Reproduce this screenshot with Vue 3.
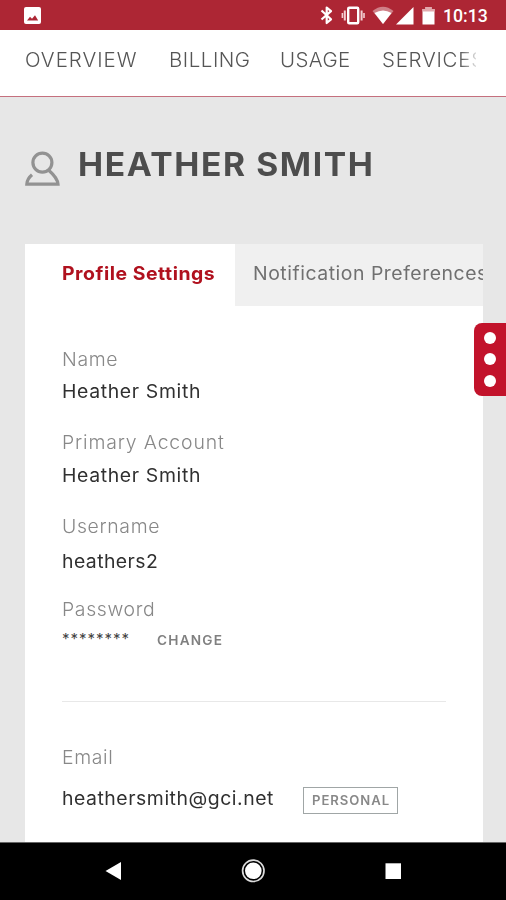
<script setup>
const nav = ['OVERVIEW', 'BILLING', 'USAGE', 'SERVICES']
const fields = [
  { key: 'name', label: 'Name', value: 'Heather Smith' },
  { key: 'account', label: 'Primary Account', value: 'Heather Smith' },
  { key: 'username', label: 'Username', value: 'heathers2' }
]
</script>

<template>
  <div class="screen">
    <header class="status">
      <svg class="photo" width="17" height="17" viewBox="0 0 17 17"><rect width="17" height="17" rx="2" fill="#fff" /><path d="M3 13.400l3-3.600 2 2 3-3.600 3.200 5.200z" fill="#ad2634" /></svg>
      <div class="status-right">
        <svg width="182" height="29" viewBox="0 0 182 29">
          <path d="M5.500 10.500l9.500 8.800-4.300 3.700V7.500l4.300 3.700-9.500 8.300" fill="none" stroke="#fff" stroke-width="2.200" stroke-linejoin="round" />
          <g fill="none" stroke="#f3cfd2"><rect x="32.200" y="7.700" width="10" height="15.500" rx="1" stroke-width="2.400" stroke="#fff" /><path d="M28.800 10.500v10M45.600 10.500v10" stroke-width="2" /><path d="M26.400 13v5M48 13v5" stroke-width="1.600" /></g>
          <path d="M56.500 11Q67 2.500 77.500 11L67 24z" fill="#cf7f87" /><path d="M58.500 13Q67 8 75.500 13L67 24z" fill="#fff" />
          <path d="M80 24.500L97.500 7v17.500z" fill="#fff" />
          <path d="M106.500 9h3V7h6v2h3v15.500h-12z" fill="#fff" /><path d="M106.500 9h3V7h6v2h3v2.500h-12z" fill="#e2a9ad" />
        </svg>
        <span class="clock">10:13</span>
      </div>
    </header>
    <nav class="nav">
      <a v-for="item in nav" :key="item" :class="['nav-item', item.toLowerCase()]"><span class="wide">{{ item }}</span></a>
    </nav>
    <main class="main">
      <div class="title">
        <svg width="36" height="36" viewBox="0 0 36 36" fill="none" stroke="#929292" stroke-width="3.200"><circle cx="17.400" cy="11.600" r="9.500" /><path d="M7 23.800Q2 28 1.800 33.200H33Q32.500 27 24 19.500" /></svg>
        <h1 class="wide">HEATHER SMITH</h1>
      </div>
      <section class="card">
        <div class="tabs">
          <div class="tab active"><span class="wide">Profile Settings</span></div>
          <div class="tab"><span class="wide">Notification Preferences</span></div>
        </div>
        <div class="body">
          <div v-for="f in fields" :key="f.key" :class="['field', f.key]">
            <div class="label"><span class="wide">{{ f.label }}</span></div>
            <div class="value"><span class="wide">{{ f.value }}</span></div>
          </div>
          <div class="field password">
            <div class="label"><span class="wide">Password</span></div>
            <div class="secret"><span class="stars">********</span><a class="change wide">CHANGE</a></div>
          </div>
          <div class="field email">
            <div class="label"><span class="wide">Email</span></div>
            <div class="value"><span class="wide">heathersmith@gci.net</span><div class="badge"><b class="wide">PERSONAL</b></div></div>
          </div>
        </div>
      </section>
      <button class="more" aria-label="More"><i></i><i></i><i></i></button>
    </main>
    <footer class="android">
      <svg width="506" height="58" viewBox="0 0 506 58" fill="#fff"><path d="M105.500 28L121 19v18z" /><circle cx="253.300" cy="27.800" r="8.300" /><circle cx="253.300" cy="27.800" r="10.700" fill="none" stroke="#ddd" stroke-width="1.700" /><rect x="385.500" y="20.300" width="15.500" height="15.700" /></svg>
    </footer>
  </div>
</template>

<style>
body { margin: 0; }
</style>

<style scoped>
* { box-sizing: border-box; }
.screen { width: 506px; height: 900px; display: flex; flex-direction: column; overflow: hidden; background: #e7e7e7; font-family: Inter, "Liberation Sans", sans-serif; }
.wide { display: inline-block; transform: scaleX(1.05); transform-origin: left; }
.status { height: 29.500px; flex: none; display: flex; justify-content: space-between; background: #ad2634; padding-left: 24px; }
.photo { margin-top: 7px; }
.status-right { display: flex; width: 190px; }
.status-right svg { flex: none; margin-right: -55px; }
.clock { font: 500 17.700px/33px Roboto, sans-serif; color: #fff; }
.nav { height: 67.500px; flex: none; background: #fff; border-bottom: 1.500px solid #c5707e; display: flex; padding-left: 25px; white-space: nowrap; font-size: 19.500px; font-weight: 300; line-height: 61px; color: #555; }
.nav-item { flex: none; }
.overview { width: 144px; letter-spacing: 0.950px; }
.billing { width: 111px; letter-spacing: 0.500px; }
.usage { width: 102px; letter-spacing: 0.400px; }
.services { width: 94px; overflow: hidden; letter-spacing: 0.700px; -webkit-mask-image: linear-gradient(90deg, #000 78px, transparent 98px); mask-image: linear-gradient(90deg, #000 78px, transparent 98px); }
.main { position: relative; flex: 1; min-height: 0; display: flex; flex-direction: column; padding: 0 23px 0 25px; }
.title { display: flex; height: 146.500px; flex: none; padding-top: 48px; gap: 16.500px; }
.title svg { margin-top: 5.500px; flex: none; }
h1 { margin: 0; align-self: flex-start; font-size: 32px; font-weight: 700; line-height: 40px; letter-spacing: 1.500px; color: #4d4d4d; white-space: nowrap; }
.card { flex: 1; min-height: 0; background: #fff; overflow: hidden; }
.tabs { display: flex; height: 62px; }
.tab { flex: none; width: 249px; padding-left: 18.500px; line-height: 59px; font-size: 18.500px; letter-spacing: 0.500px; white-space: nowrap; background: #f0f0f0; color: #707070; overflow: hidden; }
.tab.active { width: 209.500px; padding-left: 37px; background: #fff; font-weight: 700; color: #b0111e; }
.body { padding: 41.500px 37px 0; }
.field { line-height: 24px; font-size: 18.500px; letter-spacing: 0.600px; white-space: nowrap; }
.label { color: #888; font-weight: 300; }
.value { color: #303030; margin-top: 8px; display: flex; }
.name { height: 83px; }
.account { height: 84px; }
.account .label { letter-spacing: 0.800px; }
.account .value { margin-top: 9px; }
.username { height: 83px; }
.username .value { margin-top: 11px; letter-spacing: 0.400px; }
.password { height: 104.500px; border-bottom: 1.500px solid #e8e8e8; }
.secret { display: flex; align-items: center; margin-top: 5.500px; }
.stars { width: 94.500px; color: #444; font-size: 15px; padding-top: 0; height: 26px; letter-spacing: 1px; }
.change { color: #808080; font-size: 13px; font-weight: 600; letter-spacing: 1.150px; }
.email { padding-top: 43px; }
.email .value { margin-top: 17px; }
.email .value > span { width: 241px; flex: none; letter-spacing: 0.500px; }
.badge { height: 27px; width: 95px; margin-top: 1px; border: 1.500px solid #a0a6a6; padding-left: 8px; font-size: 12.500px; line-height: 25px; font-weight: 600; letter-spacing: 0.900px; color: #888; }
.badge b { font-weight: 600; }
.more { position: absolute; right: 0; top: 225.500px; width: 32.500px; height: 73px; border: 0; padding: 0 0 0 1px; border-radius: 8px 0 0 8px; background: #c2132b; display: flex; flex-direction: column; align-items: center; justify-content: center; gap: 9.500px; }
.more i { width: 12px; height: 12px; border-radius: 50%; background: #fff; }
.android { height: 58.500px; flex: none; background: #000; border-top: 1px solid #666; }
.android svg { display: block; }
</style>
